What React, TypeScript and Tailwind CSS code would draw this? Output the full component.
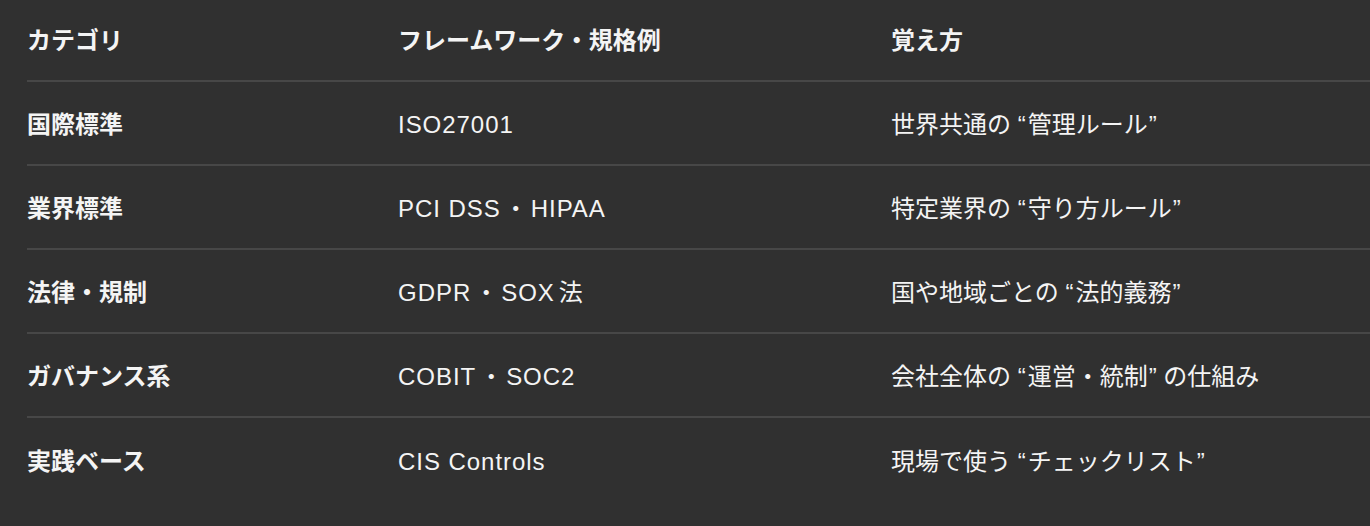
import React from "react";

const Q = ({ c, open }: { c: string; open?: boolean }) => (
  <span className={open ? "pr-[2px]" : "pl-[1px]"}>{c}</span>
);

const Dot = () => <span className="mx-[3px] tracking-normal">・</span>;

const col2: React.ReactNode[] = [
  <>ISO27001</>,
  <>PCI DSS<Dot />HIPAA</>,
  <>GDPR<Dot />SOX<span className="ml-[4px] tracking-normal">法</span></>,
  <>COBIT<Dot />SOC2</>,
  <>CIS Controls</>,
];

const col3: React.ReactNode[] = [
  <>世界共通の <Q c="“" open />管理ルール<Q c="”" /></>,
  <>特定業界の <Q c="“" open />守り方ルール<Q c="”" /></>,
  <>国や地域ごとの <Q c="“" open />法的義務<Q c="”" /></>,
  <>会社全体の <Q c="“" open />運営・統制<Q c="”" /> の仕組み</>,
  <>現場で使う <Q c="“" open />チェックリスト<Q c="”" /></>,
];

const col1 = ["国際標準", "業界標準", "法律・規制", "ガバナンス系", "実践ベース"];

export default function App() {
  return (
    <div
      className="min-h-[526px] w-full bg-[#303030] text-[#f4f4f4] text-[24px] leading-none"
      style={{ fontFamily: '"Liberation Sans", "Noto Sans CJK JP", sans-serif' }}
    >
      <div className="ml-[27px]">
        <div className="grid grid-cols-[371px_493px_1fr] h-[82px] items-center border-b-2 border-[#474747] font-bold pt-[2px]">
          <div>カテゴリ</div>
          <div>フレームワーク・規格例</div>
          <div>覚え方</div>
        </div>
        {col1.map((c, i) => (
          <div
            key={i}
            className={
              "grid grid-cols-[371px_493px_1fr] h-[84px] items-center pt-[4px] " +
              (i < col1.length - 1 ? "border-b-2 border-[#474747]" : "")
            }
          >
            <div className="font-bold">{c}</div>
            <div className="tracking-[0.04em]">{col2[i]}</div>
            <div>{col3[i]}</div>
          </div>
        ))}
      </div>
    </div>
  );
}
